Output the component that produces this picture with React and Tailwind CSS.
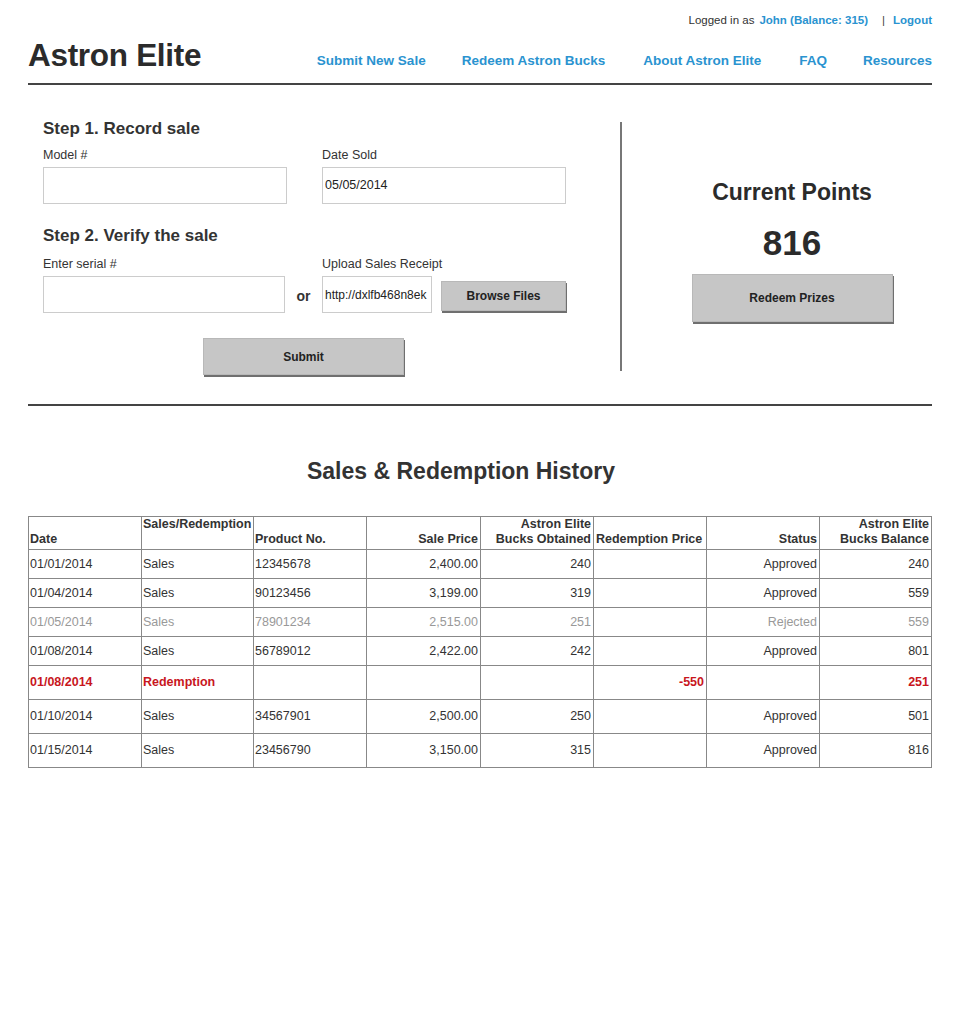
import React from 'react';

const rows = [
  { date: '01/01/2014', type: 'Sales', product: '12345678', price: '2,400.00', bucks: '240', redeem: '', status: 'Approved', balance: '240' },
  { date: '01/04/2014', type: 'Sales', product: '90123456', price: '3,199.00', bucks: '319', redeem: '', status: 'Approved', balance: '559' },
  { date: '01/05/2014', type: 'Sales', product: '78901234', price: '2,515.00', bucks: '251', redeem: '', status: 'Rejected', balance: '559', muted: true },
  { date: '01/08/2014', type: 'Sales', product: '56789012', price: '2,422.00', bucks: '242', redeem: '', status: 'Approved', balance: '801' },
  { date: '01/08/2014', type: 'Redemption', product: '', price: '', bucks: '', redeem: '-550', status: '', balance: '251', red: true },
  { date: '01/10/2014', type: 'Sales', product: '34567901', price: '2,500.00', bucks: '250', redeem: '', status: 'Approved', balance: '501', tall: true },
  { date: '01/15/2014', type: 'Sales', product: '23456790', price: '3,150.00', bucks: '315', redeem: '', status: 'Approved', balance: '816', tall: true },
];

const GrayButton = ({ children, className }) => (
  <button className={`bg-[#c6c6c6] border border-[#b8b8b8] shadow-[1px_2px_0_#6f6f6f] font-bold text-[12px] text-[#222] ${className}`}>
    {children}
  </button>
);

const App = () => {
  return (
    <div className="min-h-screen bg-white text-[#333] font-['Liberation_Sans',Arial,sans-serif] pl-[28px] pr-[30px]">
      {/* Header */}
      <div className="flex justify-end items-center pt-[13px] h-[28px] text-[11.5px]">
        <span>Logged in as</span>
        <span className="ml-[5px] font-bold text-[#2a93d0]">John (Balance: 315)</span>
        <span className="ml-[14px] text-[#444]">|</span>
        <span className="ml-[8px] font-bold text-[#2a93d0]">Logout</span>
      </div>
      <div className="flex items-end justify-between h-[55px] pb-[12px]">
        <h1 className="text-[31.5px] leading-none font-bold text-[#2b2b2b] tracking-[-0.3px]">Astron Elite</h1>
        <nav className="flex gap-[36px] text-[13.5px] font-bold text-[#2a93d0] leading-none pb-[4px]">
          <a>Submit New Sale</a>
          <a>Redeem Astron Bucks</a>
          <a className="ml-[2px]">About Astron Elite</a>
          <a className="ml-[2px]">FAQ</a>
          <a>Resources</a>
        </nav>
      </div>
      <div className="h-[2px] bg-[#444]" />

      {/* Form + points */}
      <div className="flex pt-[36px] pb-[29px]">
        <div className="w-[592px] pl-[15px]">
          <h2 className="text-[17px] font-bold text-[#333] leading-none mt-[-1px]">Step 1. Record sale</h2>
          <div className="flex gap-[35px] mt-[12px]">
            <div className="w-[244px]">
              <div className="text-[12.5px] leading-none">Model #</div>
              <input className="mt-[5px] w-full h-[37px] border border-[#ccc] bg-white" />
            </div>
            <div className="w-[244px]">
              <div className="text-[12.5px] leading-none">Date Sold</div>
              <input defaultValue="05/05/2014" className="mt-[5px] w-full h-[37px] border border-[#ccc] bg-white px-[2px] text-[12.5px] text-[#222]" />
            </div>
          </div>
          <h2 className="text-[17px] font-bold text-[#333] leading-none mt-[23px]">Step 2. Verify the sale</h2>
          <div className="flex mt-[14px]">
            <div className="w-[242px]">
              <div className="text-[12.5px] leading-none">Enter serial #</div>
              <input className="mt-[6px] w-full h-[37px] border border-[#ccc] bg-white" />
            </div>
            <div className="w-[37px] flex items-end justify-center pb-[6px] text-[14px] font-bold text-[#333]">or</div>
            <div>
              <div className="text-[12.5px] leading-none">Upload Sales Receipt</div>
              <div className="flex items-center mt-[6px]">
                <input defaultValue="http://dxlfb468n8ek" className="w-[110px] h-[37px] border border-[#ccc] bg-white px-[2px] text-[12px] text-[#222]" />
                <GrayButton className="ml-[9px] mt-[2px] w-[125px] h-[30px]">Browse Files</GrayButton>
              </div>
            </div>
          </div>
          <div className="flex mt-[25px] pl-[160px]">
            <GrayButton className="w-[201px] h-[37px]">Submit</GrayButton>
          </div>
        </div>
        <div className="w-[2px] bg-[#777] mt-[1px] mb-[4px]" />
        <div className="flex-1 pl-[30px] flex flex-col items-center pt-[60px]">
          <div className="text-[23px] font-bold text-[#2b2b2b] leading-none">Current Points</div>
          <div className="text-[35px] font-bold text-[#2b2b2b] leading-none mt-[21px]">816</div>
          <GrayButton className="mt-[14px] w-[201px] h-[48px]">Redeem Prizes</GrayButton>
        </div>
      </div>
      <div className="h-[2px] bg-[#444]" />

      {/* History */}
      <h2 className="text-center text-[23px] font-bold text-[#333] leading-none mt-[54px] mr-[38px]">Sales &amp; Redemption History</h2>
      <table className="w-full mt-[33px] border-collapse text-[12.5px] table-fixed">
        <thead>
          <tr className="h-[33px] font-bold align-bottom leading-[15px]">
            <th className="border border-[#888] text-left font-bold px-[1px] pb-[2px] w-[113px]">Date</th>
            <th className="border border-[#888] text-left font-bold px-[1px] pb-[2px] w-[112px] align-top pt-0 whitespace-nowrap">Sales/Redemption</th>
            <th className="border border-[#888] text-left font-bold px-[1px] pb-[2px] w-[113px]">Product No.</th>
            <th className="border border-[#888] text-right font-bold px-[2px] pb-[2px] w-[114px]">Sale Price</th>
            <th className="border border-[#888] text-right font-bold px-[2px] pb-[2px] w-[113px] whitespace-nowrap">Astron Elite<br />Bucks Obtained</th>
            <th className="border border-[#888] text-left font-bold px-[2px] pb-[2px] w-[113px] whitespace-nowrap">Redemption Price</th>
            <th className="border border-[#888] text-right font-bold px-[2px] pb-[2px] w-[113px]">Status</th>
            <th className="border border-[#888] text-right font-bold px-[2px] pb-[2px] whitespace-nowrap">Astron Elite<br />Bucks Balance</th>
          </tr>
        </thead>
        <tbody>
          {rows.map((r, i) => {
            const tone = r.red ? 'text-[#c8161d] font-bold' : r.muted ? 'text-[#999]' : 'text-[#333]';
            const h = r.red ? 'h-[34px]' : r.tall ? 'h-[34px]' : 'h-[29px]';
            return (
              <tr key={i} className={`${h} ${tone}`}>
                <td className="border border-[#888] px-[1px]">{r.date}</td>
                <td className="border border-[#888] px-[1px]">{r.type}</td>
                <td className="border border-[#888] px-[1px]">{r.product}</td>
                <td className="border border-[#888] px-[2px] text-right">{r.price}</td>
                <td className="border border-[#888] px-[2px] text-right">{r.bucks}</td>
                <td className="border border-[#888] px-[2px] text-right">{r.redeem}</td>
                <td className="border border-[#888] px-[2px] text-right">{r.status}</td>
                <td className="border border-[#888] px-[2px] text-right">{r.balance}</td>
              </tr>
            );
          })}
        </tbody>
      </table>
    </div>
  );
};

export default App;
